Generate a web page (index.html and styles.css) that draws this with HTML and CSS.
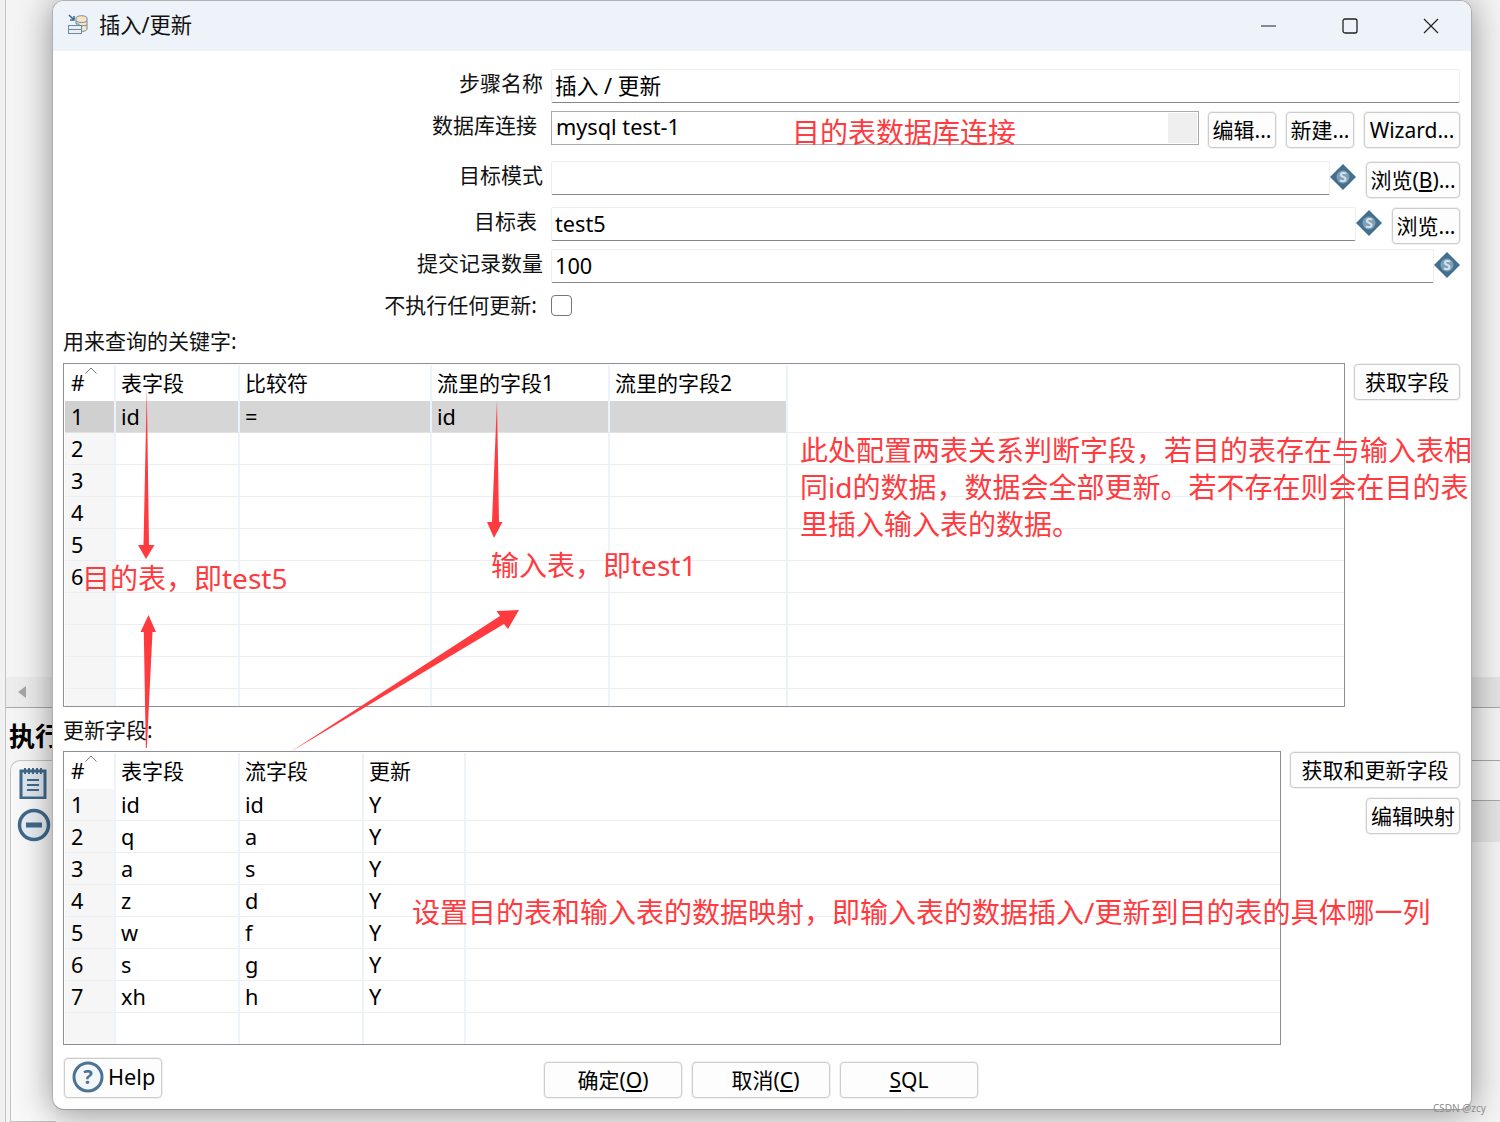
FILE: index.html
```html
<!DOCTYPE html>
<html lang="zh-CN">
<head>
<meta charset="utf-8">
<title>插入/更新</title>
<link rel="stylesheet" href="styles.css">
</head>
<body>
<div class="desktop">
  <div class="bg-edge-left"></div>
  <div class="bg-scroll-left"><svg width="10" height="14" viewBox="0 0 10 14"><path d="M9 1v12L1 7z" fill="#a6a6a6"/></svg></div>
  <div class="bg-band bg-band-a"></div>
  <div class="bg-band bg-band-b"></div>
  <div class="bg-line bg-line-a"></div>
  <div class="bg-line bg-line-b"></div>
  <div class="bg-line bg-line-c"></div>
  <div class="bg-title">执行</div>
  <div class="bg-panel">
    <svg class="bg-icon-note" width="28" height="32" viewBox="0 0 28 32"><rect x="2" y="4" width="24" height="27" fill="#dfe7ee" stroke="#3f6a8c" stroke-width="3"/><path d="M6 1v6M10 1v6M14 1v6M18 1v6M22 1v6" stroke="#3f6a8c" stroke-width="2"/><path d="M8 13h12M8 18h12M8 23h12" stroke="#3f6a8c" stroke-width="2"/></svg>
    <svg class="bg-icon-minus" width="34" height="34" viewBox="0 0 34 34"><circle cx="17" cy="17" r="14.500" fill="#e8eef3" stroke="#3f6a8c" stroke-width="3.500"/><rect x="9" y="14.500" width="16" height="5" fill="#3f6a8c"/></svg>
  </div>

  <div class="window">
    <header class="titlebar">
      <svg class="app-icon" width="22" height="24" viewBox="0 0 22 24"><path d="M2 3l5 5M7 4v4H3" fill="none" stroke="#3f6a8c" stroke-width="1.600"/><path d="M9 6c0-3 11-3 11 0v11c0 2-5 3-8 2V12H9z" fill="#fbe3bf" stroke="#6c8ba6"/><path d="M9 9c2 2 9 2 11 0M9 13c2 1 9 1 11 0" fill="none" stroke="#6c8ba6"/><rect x="1.500" y="13.500" width="13" height="8" fill="#e8eef4" stroke="#6c8ba6"/><path d="M1 17.500h14" stroke="#6c8ba6"/></svg>
      <span class="title-text">插入/更新</span>
      <div class="win-controls">
        <svg class="win-btn" width="16" height="16" viewBox="0 0 16 16"><path d="M0 8h15" stroke="#222" stroke-width="1.100"/></svg>
        <svg class="win-btn" width="16" height="16" viewBox="0 0 16 16"><rect x="1" y="1" width="14" height="14" rx="2" fill="none" stroke="#222" stroke-width="1.300"/></svg>
        <svg class="win-btn" width="16" height="16" viewBox="0 0 16 16"><path d="M1 1l14 14M15 1L1 15" stroke="#222" stroke-width="1.200"/></svg>
      </div>
    </header>

    <main class="body">
      <div class="row row-1">
        <label class="lbl">步骤名称</label>
        <div class="field field-grow">插入 / 更新</div>
      </div>
      <div class="row row-2">
        <label class="lbl lbl-in">数据库连接</label>
        <div class="select"><span class="select-text">mysql test-1</span><span class="select-arrow"></span></div>
        <button class="btn btn-edit">编辑...</button>
        <button class="btn btn-new">新建...</button>
        <button class="btn btn-wizard">Wizard...</button>
      </div>
      <div class="row row-3">
        <label class="lbl">目标模式</label>
        <div class="field field-grow"></div>
        <svg class="var-icon" width="26" height="26" viewBox="0 0 26 26"><use href="#var"/></svg>
        <button class="btn btn-browse-b">浏览(<u>B</u>)...</button>
      </div>
      <div class="row row-4">
        <label class="lbl lbl-in">目标表</label>
        <div class="field field-grow">test5</div>
        <svg class="var-icon" width="26" height="26" viewBox="0 0 26 26"><use href="#var"/></svg>
        <button class="btn btn-browse">浏览...</button>
      </div>
      <div class="row row-5">
        <label class="lbl">提交记录数量</label>
        <div class="field field-grow">100</div>
        <svg class="var-icon" width="26" height="26" viewBox="0 0 26 26"><use href="#var"/></svg>
      </div>
      <div class="row row-6">
        <label class="lbl lbl-in">不执行任何更新:</label>
        <span class="check"></span>
      </div>

      <div class="section-label sl-1">用来查询的关键字:</div>
      <div class="table-row tr-1">
        <div class="grid grid-keys">
          <table>
            <colgroup><col class="c-n"><col class="c-a"><col class="c-b"><col class="c-c"><col class="c-c"><col></colgroup>
            <thead><tr><th class="num"><span class="hash">#</span><svg class="caret" width="12" height="7" viewBox="0 0 12 7"><path d="M.5 6.500L6 1l5.500 5.500" fill="none" stroke="#777"/></svg></th><th>表字段</th><th>比较符</th><th>流里的字段1</th><th>流里的字段2</th><th class="fill"></th></tr></thead>
            <tbody>
              <tr class="sel"><td class="num">1</td><td>id</td><td>=</td><td>id</td><td></td><td class="fill"></td></tr>
              <tr><td class="num">2</td><td></td><td></td><td></td><td></td><td class="fill"></td></tr>
              <tr><td class="num">3</td><td></td><td></td><td></td><td></td><td class="fill"></td></tr>
              <tr><td class="num">4</td><td></td><td></td><td></td><td></td><td class="fill"></td></tr>
              <tr><td class="num">5</td><td></td><td></td><td></td><td></td><td class="fill"></td></tr>
              <tr><td class="num">6</td><td></td><td></td><td></td><td></td><td class="fill"></td></tr>
              <tr><td class="num"></td><td></td><td></td><td></td><td></td><td class="fill"></td></tr>
              <tr><td class="num"></td><td></td><td></td><td></td><td></td><td class="fill"></td></tr>
              <tr><td class="num"></td><td></td><td></td><td></td><td></td><td class="fill"></td></tr>
              <tr><td class="num"></td><td></td><td></td><td></td><td></td><td class="fill"></td></tr>
            </tbody>
          </table>
        </div>
        <div class="side-btns"><button class="btn btn-get">获取字段</button></div>
      </div>

      <div class="section-label sl-2">更新字段:</div>
      <div class="table-row tr-2">
        <div class="grid grid-update">
          <table>
            <colgroup><col class="c-n"><col class="c-a"><col class="c-a"><col class="c-d"><col></colgroup>
            <thead><tr><th class="num"><span class="hash">#</span><svg class="caret" width="12" height="7" viewBox="0 0 12 7"><path d="M.5 6.500L6 1l5.500 5.500" fill="none" stroke="#777"/></svg></th><th>表字段</th><th>流字段</th><th>更新</th><th class="fill"></th></tr></thead>
            <tbody>
              <tr><td class="num">1</td><td>id</td><td>id</td><td>Y</td><td class="fill"></td></tr>
              <tr><td class="num">2</td><td>q</td><td>a</td><td>Y</td><td class="fill"></td></tr>
              <tr><td class="num">3</td><td>a</td><td>s</td><td>Y</td><td class="fill"></td></tr>
              <tr><td class="num">4</td><td>z</td><td>d</td><td>Y</td><td class="fill"></td></tr>
              <tr><td class="num">5</td><td>w</td><td>f</td><td>Y</td><td class="fill"></td></tr>
              <tr><td class="num">6</td><td>s</td><td>g</td><td>Y</td><td class="fill"></td></tr>
              <tr><td class="num">7</td><td>xh</td><td>h</td><td>Y</td><td class="fill"></td></tr>
              <tr><td class="num"></td><td></td><td></td><td></td><td class="fill"></td></tr>
            </tbody>
          </table>
        </div>
        <div class="side-btns">
          <button class="btn btn-getupd">获取和更新字段</button>
          <button class="btn btn-map">编辑映射</button>
        </div>
      </div>

      <footer class="footer">
        <button class="btn btn-help">
          <svg width="32" height="32" viewBox="0 0 32 32"><circle cx="16" cy="16" r="14" fill="#f4f7fa" stroke="#4a7395" stroke-width="3"/><text x="16" y="23" class="help-q">?</text></svg>
          <span>Help</span>
        </button>
        <div class="footer-main">
          <button class="btn btn-foot">确定(<u>O</u>)</button>
          <button class="btn btn-foot btn-cancel">取消(<u>C</u>)</button>
          <button class="btn btn-foot"><u>S</u>QL</button>
        </div>
      </footer>
    </main>
  </div>

  <svg class="arrows" width="1500" height="1122" viewBox="0 0 1500 1122">
    <defs>
      <g id="var">
        <path d="M13 0l13 13-13 13L0 13z" fill="#44708f"/>
        <circle cx="13" cy="13" r="6.500" fill="#7f9fb7"/>
        <text x="13" y="18" class="var-s">S</text>
      </g>
    </defs>
    <g fill="#ff3b3f">
      <path d="M146.800 388L149 545h5.500l-8.500 14-8-14h5.500z"/>
      <path d="M497 400l2 122h3.500l-8.500 16-7-16h5z"/>
      <path d="M145.800 748l-2-116h-3.300l8-17 7.500 17h-3.500L146.800 748z"/>
      <path d="M289.500 752.500l210.500-136.500-3.500-5 22.500-1-11 19-4-5z"/>
    </g>
  </svg>

  <div class="note note-db">目的表数据库连接</div>
  <div class="note note-rel">此处配置两表关系判断字段，若目的表存在与输入表相<br>同id的数据，数据会全部更新。若不存在则会在目的表<br>里插入输入表的数据。</div>
  <div class="note note-target">目的表，即test5</div>
  <div class="note note-input">输入表，即test1</div>
  <div class="note note-map">设置目的表和输入表的数据映射，即输入表的数据插入/更新到目的表的具体哪一列</div>
  <div class="watermark">CSDN @zcy</div>
</div>
</body>
</html>
```

FILE: styles.css
```css
* { box-sizing: border-box; }
html, body { margin: 0; padding: 0; }
body {
  width: 1500px;
  height: 1122px;
  overflow: hidden;
  background: #f4f4f4;
  font-family: "Noto Sans", "Noto Sans CJK SC", sans-serif;
  font-size: 21px;
  color: #000;
}
.desktop { position: relative; width: 1500px; height: 1122px; overflow: hidden; }

/* background application behind the dialog */
.bg-edge-left { position: absolute; left: 0; top: 0; width: 6px; height: 1122px; background: #f1f1f1; border-right: 1px solid #c4c4c4; }
.bg-scroll-left { position: absolute; left: 6px; top: 677px; width: 50px; height: 31px; background: #ececec; border-bottom: 1px solid #a8a8a8; display: flex; align-items: center; padding-left: 11px; }
.bg-band { position: absolute; left: 1472px; width: 28px; background: #e4e4e4; }
.bg-band-a { top: 677px; height: 30px; }
.bg-band-b { top: 800px; height: 42px; }
.bg-line { position: absolute; left: 1472px; width: 28px; height: 1px; background: #a8a8a8; }
.bg-line-a { top: 707px; }
.bg-line-b { top: 760px; }
.bg-line-c { top: 800px; }
.bg-title { position: absolute; left: 9px; top: 717px; font-size: 26px; font-weight: 700; line-height: 38px; white-space: nowrap; }
.bg-panel { position: absolute; left: 10px; top: 760px; width: 46px; height: 362px; border: 1px solid #c4c4c4; border-right: 0; border-radius: 10px 0 0 0; background: #f8f8f8; }
.bg-icon-note { position: absolute; left: 8px; top: 6px; }
.bg-icon-minus { position: absolute; left: 6px; top: 47px; }

/* dialog window */
.window {
  position: absolute;
  left: 52px;
  top: 0;
  width: 1420px;
  height: 1110px;
  background: #fff;
  border: 1px solid #b0b0b0;
  border-bottom-color: #999;
  border-radius: 12px;
  box-shadow: 0 2px 34px rgba(0, 0, 0, .42);
  overflow: hidden;
  display: flex;
  flex-direction: column;
}
.titlebar { height: 50px; flex: none; background: #edf3f8; display: flex; align-items: center; padding: 0 0 5px 14px; }
.app-icon { flex: none; margin-top: 1px; }
.title-text { margin-left: 10px; font-size: 21.300px; color: #111; }
.win-controls { margin-left: auto; display: flex; align-items: center; gap: 65px; padding-right: 32px; margin-top: 4px; }
.win-btn { display: block; }

.body { flex: 1; padding: 0 11px 0 10px; display: flex; flex-direction: column; }

.row { display: flex; align-items: flex-start; flex: none; }
.row-1 { margin-top: 18px; height: 34px; }
.row-2 { margin-top: 8px; height: 37px; }
.row-3 { margin-top: 13px; height: 37px; }
.row-4 { margin-top: 9px; height: 37px; }
.row-5 { margin-top: 5px; height: 34px; }
.row-6 { margin-top: 12px; height: 22px; }

.lbl { flex: none; width: 480px; margin-right: 8px; text-align: right; line-height: 29px; white-space: nowrap; color: #111; }
.lbl-in { padding-right: 6px; }
.row-6 .lbl { line-height: 21px; }

.field { height: 34px; border: 1px solid #eeeeee; border-bottom: 1px solid #858585; border-radius: 2px; padding-left: 3px; font-size: 21.700px; line-height: 31px; white-space: nowrap; color: #000; }
.field-grow { flex: 1; }
.select { flex: none; width: 648px; height: 34px; border: 1px solid #ababab; display: flex; justify-content: space-between; padding: 1px; }
.select-text { font-size: 21.700px; line-height: 27px; padding-left: 3px; }
.select-arrow { width: 29px; background: #efefef; }
.var-icon { flex: none; margin: 3px 0 0; }

.btn {
  flex: none;
  height: 36px;
  padding: 0;
  margin: 1px 0;
  background: #fdfdfd;
  border: 1px solid #cccccc;
  border-radius: 4px;
  box-shadow: 0 0 0 1px #f1f1f1;
  font-family: inherit;
  font-size: 21px;
  line-height: 1;
  color: #000;
  white-space: nowrap;
  display: inline-flex;
  align-items: center;
  justify-content: center;
}
.btn-edit { width: 68px; margin-left: 9px; }
.btn-new { width: 68px; margin-left: 10px; }
.btn-wizard { width: 96px; margin-left: 10px; }
.btn-browse-b { width: 94px; margin-left: 10px; }
.btn-browse { width: 68px; margin-left: 10px; }

.check { width: 21px; height: 21px; border: 1.500px solid #767676; border-radius: 4px; background: #fff; }

.section-label { flex: none; height: 30px; line-height: 30px; color: #111; }
.sl-1 { margin-top: 9px; }
.sl-2 { margin-top: 8px; }

.table-row { display: flex; align-items: flex-start; flex: none; }
.tr-1 { margin-top: 7px; height: 344px; }
.tr-2 { margin-top: 6px; height: 294px; }
.grid { flex: none; height: 100%; border: 1px solid #8a8f98; overflow: hidden; padding: 1px 0 0 1px; }
.grid-keys { width: 1282px; }
.grid-update { width: 1218px; }
.grid table { width: 100%; border-collapse: separate; border-spacing: 0; table-layout: fixed; }
.c-n { width: 51px; }
.c-a { width: 124px; }
.c-b { width: 192px; }
.c-c { width: 178px; }
.c-d { width: 102px; }
.grid th, .grid td {
  padding: 0 0 0 5px;
  text-align: left;
  font-weight: 400;
  white-space: nowrap;
  border-right: 2px solid #eef2f9;
}
.grid th.num, .grid td.num { padding-left: 6px; }
.grid th { height: 36px; line-height: 36px; font-size: 21px; position: relative; }
.grid td { height: 32px; padding-top: 1px; line-height: 30px; font-size: 21.700px; border-bottom: 1px solid #eceef1; }
.grid .num { background: #f6f6f6; }
.grid th.num { background: #fff; }
.grid .fill { border-right: 0; }
.sel td { background: #d6d6d6; border-bottom-color: #e2e2e2; }
.sel td.num { background: #d0d0d0; }
.sel td.fill { background: #fff; border-bottom-color: #eceef1; }
.caret { position: absolute; left: 20px; top: 2px; }

.side-btns { display: flex; flex-direction: column; align-items: flex-end; gap: 8px; flex: 1; }
.btn-get { width: 106px; }
.btn-getupd { width: 170px; }
.btn-map { width: 94px; }

.footer { margin-top: 13px; height: 40px; flex: none; display: flex; align-items: flex-end; padding-left: 1px; }
.btn-help { width: 98px; height: 40px; margin: 0; gap: 4px; justify-content: flex-start; padding: 0 0 2px 7px; font-size: 21.700px; }
.help-q { font-family: "Noto Sans", sans-serif; font-size: 20px; font-weight: 700; fill: #4a7395; text-anchor: middle; }
.footer-main { margin-left: 382px; display: flex; gap: 10px; }
.btn-foot { width: 138px; margin: 0; }
.btn-cancel { padding-left: 9px; }

/* screenshot annotations on top of the dialog */
.arrows { position: absolute; left: 0; top: 0; pointer-events: none; }
.var-s { font-family: "Noto Sans", sans-serif; font-size: 14px; font-weight: 700; fill: #d5e2ea; text-anchor: middle; }
.note { position: absolute; color: #ff3b3f; font-size: 28px; line-height: 37px; white-space: nowrap; }
.note-db { left: 792px; top: 114px; }
.note-rel { left: 800px; top: 432px; }
.note-target { left: 82px; top: 560px; }
.note-input { left: 491px; top: 547px; }
.note-map { left: 412px; top: 894px; }
.watermark { position: absolute; left: 1433px; top: 1101px; font-size: 10px; line-height: 14px; color: #8d8d8d; white-space: nowrap; }
```
